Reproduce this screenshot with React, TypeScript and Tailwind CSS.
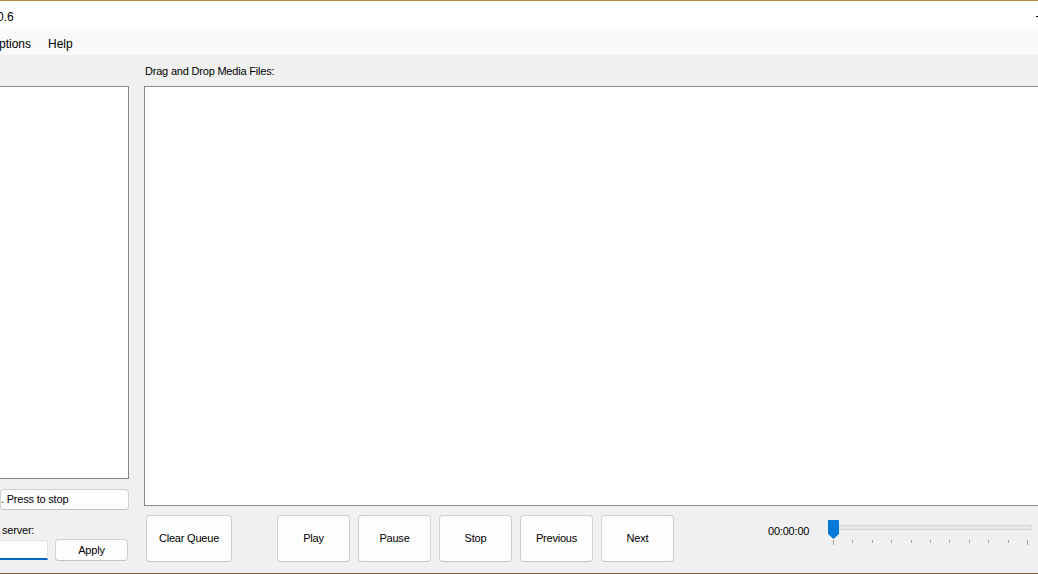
import React from "react";

const btn =
  "flex items-center justify-center bg-[#fdfdfd] border border-[#d0d0d0] border-b-[#c4c4c4] rounded-[4px] text-[11px] text-black tracking-[-0.2px]";

export default function App() {
  const ticks = Array.from({ length: 11 });
  return (
    <div
      className="w-[1038px] h-[574px] overflow-hidden bg-[#f0f0f0] flex flex-col text-black"
      style={{ fontFamily: '"Liberation Sans", Arial, sans-serif' }}
    >
      <div className="h-px bg-[#b08a44] shrink-0" />
      <div className="h-[30px] bg-white flex items-center justify-between shrink-0 text-[12px]">
        <span className="-ml-[3px] mt-[1px]">0.6</span>
        <div className="w-[2px] h-px bg-black" />
      </div>
      <div className="h-[24px] bg-[#f9f9f9] flex items-center shrink-0 text-[12px]">
        <span className="-ml-[1px] mt-[1px]">ptions</span>
        <span className="ml-[17px] mt-[1px]">Help</span>
      </div>
      <div className="flex-1 flex">
        <div className="w-[129px] shrink-0 flex flex-col">
          <div className="mt-[31px] h-[393px] bg-white border-t border-r border-b border-[#828790]" />
          <div className={`mt-[10px] h-[21px] ${btn} justify-start`}>
            <span>. Press to stop</span>
          </div>
          <div className="mt-[14px] h-[13px] leading-[13px] text-[11px] tracking-[-0.2px]">
            <span className="ml-[2px]">server:</span>
          </div>
          <div className="mt-[2px] flex items-start">
            <div className="mt-[1px] w-[48px] h-[20px] bg-white border-t border-r border-[#e0e0e0] border-b-2 border-b-[#0067c0] rounded-tr-[3px]" />
            <div className={`ml-[7px] w-[73px] h-[22px] ${btn}`}>Apply</div>
          </div>
        </div>
        <div className="ml-[15px] flex-1 flex flex-col">
          <div className="mt-[10px] h-[13px] leading-[13px] text-[11px] pl-[1px] tracking-[-0.2px]">
            Drag and Drop Media Files:
          </div>
          <div className="mt-[8px] h-[420px] bg-white border-l border-t border-b border-[#828790]" />
          <div className="mt-[9px] flex items-start">
            <div className={`ml-[2px] w-[86px] h-[47px] ${btn}`}>Clear Queue</div>
            <div className={`ml-[45px] w-[73px] h-[47px] ${btn}`}>Play</div>
            <div className={`ml-[8px] w-[73px] h-[47px] ${btn}`}>Pause</div>
            <div className={`ml-[8px] w-[73px] h-[47px] ${btn}`}>Stop</div>
            <div className={`ml-[8px] w-[73px] h-[47px] ${btn}`}>Previous</div>
            <div className={`ml-[8px] w-[73px] h-[47px] ${btn}`}>Next</div>
            <div className="ml-[94px] mt-[10px] w-[43px] h-[13px] leading-[13px] text-[11px] tracking-[-0.2px]">
              00:00:00
            </div>
            <div className="ml-[17px] mt-[5px] w-[210px] h-[30px] relative">
              <div className="ml-[5px] mt-[5px] w-[199px] h-[5px] bg-[#e7e7e7] border border-[#d6d6d6]" />
              <div className="ml-[5px] mt-[10px] w-[195px] flex justify-between">
                {ticks.map((_, i) => (
                  <div
                    key={i}
                    className={`w-px bg-[#a0a0a0] ${i === 0 || i === 10 ? "h-[5px]" : "h-[3px]"}`}
                  />
                ))}
              </div>
              <svg
                className="absolute left-0 top-0"
                width="12"
                height="19"
                viewBox="0 0 12 19"
              >
                <path d="M0 1 Q0 0 1 0 L10 0 Q11 0 11 1 L11 14 L5.5 19 L0 14 Z" fill="#0078d7" />
              </svg>
            </div>
          </div>
        </div>
      </div>
      <div className="h-px bg-[#7a5b35] shrink-0" />
    </div>
  );
}
